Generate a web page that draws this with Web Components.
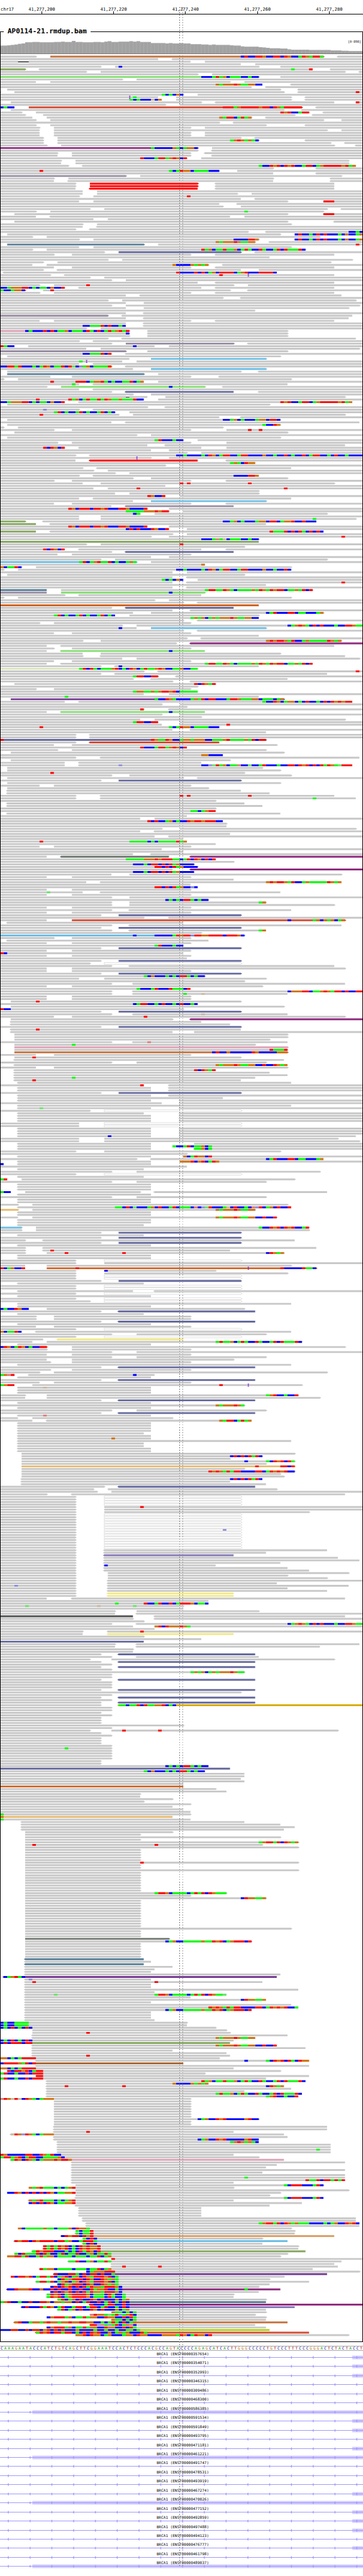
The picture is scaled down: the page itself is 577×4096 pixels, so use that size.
<!DOCTYPE html>
<html lang="en">
<head>
<meta charset="utf-8">
<title>AP0114-21.rmdup.bam chr17</title>
<style>
html,body{margin:0;background:#fff}
body{font-family:"DejaVu Sans Mono","Liberation Mono",monospace;color:#000}
</style>
</head>
<body>
<genome-view>
<genome-ruler chrom="chr17" ticks="41,277,200 41,277,220 41,277,240 41,277,260 41,277,280"></genome-ruler>
<alignment-track>
<span slot="name">AP0114-21.rmdup.bam</span>
<coverage-plot range="[0-898]"></coverage-plot>
<read-pileup></read-pileup>
</alignment-track>
<base-sequence>CAAAGAATACCCATCTGTCAGCTTCGGAAATCCACTCTCCCACGCCAGTACCCCAGAGCATCACTTGGGCCCCCTGTCCCTTTCCCGGGACTCTACTACCT</base-sequence>
<transcript-list>
<transcript-row exon="98">BRCA1 (ENST00000357654)</transcript-row>
<transcript-row exon="98">BRCA1 (ENST00000354071)</transcript-row>
<transcript-row exon="98">BRCA1 (ENST00000352993)</transcript-row>
<transcript-row>BRCA1 (ENST00000346315)</transcript-row>
<transcript-row>BRCA1 (ENST00000309486)</transcript-row>
<transcript-row>BRCA1 (ENST00000468300)</transcript-row>
<transcript-row exon="9">BRCA1 (ENST00000586385)</transcript-row>
<transcript-row exon="98">BRCA1 (ENST00000591534)</transcript-row>
<transcript-row exon="98">BRCA1 (ENST00000591849)</transcript-row>
<transcript-row>BRCA1 (ENST00000493795)</transcript-row>
<transcript-row exon="98">BRCA1 (ENST00000471181)</transcript-row>
<transcript-row exon="9">BRCA1 (ENST00000461221)</transcript-row>
<transcript-row>BRCA1 (ENST00000491747)</transcript-row>
<transcript-row>BRCA1 (ENST00000478531)</transcript-row>
<transcript-row>BRCA1 (ENST00000493919)</transcript-row>
<transcript-row exon="98">BRCA1 (ENST00000467274)</transcript-row>
<transcript-row exon="9">BRCA1 (ENST00000470026)</transcript-row>
<transcript-row exon="98">BRCA1 (ENST00000477152)</transcript-row>
<transcript-row exon="98">BRCA1 (ENST00000492859)</transcript-row>
<transcript-row exon="98">BRCA1 (ENST00000497488)</transcript-row>
<transcript-row>BRCA1 (ENST00000494123)</transcript-row>
<transcript-row exon="98">BRCA1 (ENST00000476777)</transcript-row>
<transcript-row>BRCA1 (ENST00000461798)</transcript-row>
<transcript-row exon="9">BRCA1 (ENST00000489037)</transcript-row>
</transcript-list>
</genome-view>
<script>
// One line per pileup row. "a-b" is a read over columns a..b, "<" or ">" its strand arrow,
// a trailing letter its colour; "67CTT" puts mismatching bases at column 67 (lower case: low quality);
// "D" is a deletion, "I" an insertion, and "xN" repeats the row.
const READS = `0-10> 14-90>o 67CTCCTTGCCTTCTGCCATGATTA <94-101
0-44 <48-101
0-53 57-101 D5-8
0-67 71-101
0-28> 32-72> 33C 78-101
0-7>v <11-87 81A 86T <92-101
0-24> 28-96> <100-101
0-55> 59-101
0-72>g 56CCCATAGCAAACCACC 78-101
0-34> 38-101
0-10 14-64> 68-101
0-73 60GAGGGTGAAGGCC <81-101
0-70 <74-101
2-78> <83-101
0-0>o 4-79> <83-101 99T
0-51> 45ACACGC 55-101
0-44 I36 37A 49-81> <85-101
0-45 36ACACCCgCG 49-81> <85-101
3-56> <60-93 99-101 99T
0-46> 50-101
0-4 0CACC 8-84>s 62TTTAGTTTTTGTTCTGATTTTT <88-101
3-79> <84-101
0-6> 10-86> 78TGTCCATT <90-101
0-7> 12-82> <87-101
0-9 13-70> 61GATTCATAG <74-101
0-10> 14-90> 95-101
0-61> <65-101
0-10> 14-74> <85-101
0-11> 15-53> 57-101
0-11 15-91> 95-101
0-11 15-53> 57-101 x2
0-12> 16-67> <71-101
0-12> 16-72> 64AGTGAGAC <85-101
0-12> 16-92> <96-101
0-13> 17-93> <99-101
0-55>p 42ACCCCCGACAGGC 59-101
0-55> <59-101
0-16> 20-53> <57-101
0-16 20-53> <59-101
0-52> 39TCCCATTAGTGCT 56-101
0-17> 21-97>
0-17 21-97>
0-19> <23-99 72ACCTGTCTGTCCATTCAGTTTTTGTAG
0-76> <88-101
0-61> 11T 47ACATGGCAAAACCC 66-101
0-76 <88-101
0-35>l 39-95>
0-15> 19-76> <92-101
0-15 <19-76 <92-101
0-21> 25-55>r <60-93 x2
0-21 <25-55r <60-93
0-23 27-101
0-23 27-66> 70-101
0-22> 26-101 52T
0-67 <71-101
0-22 26-80> 90-101 90TTT
0-61 <66-101
0-62> 67-101
0-25> 29-91> <95-101
0-10> 14-90> 68A
0-0> 4-80> <90-101 90TTT
0-10 <14-64 68-101
0-26 30-101
4-80> <93-101
0-23> 27-81>
0-23 <27-101
0-21> <25-101
0-69> <74-101 97CCAC
2-78> 82-101 82CTCCACTCTCCCACGCCAG
0-9> 13-89>
0-22> 26-72> 65CCCCTTG <82-101 82CTCCACTCTCCCACGCCAG
0-71> 60GAGGGTGAAGG <75-101
2-40>t 44-101 99T
0-22 26-81>
0-9> 13-85> 56TAGCAATAAGCATACCTACCATCTAAATC
0-29> 33-67>i <71-101
0-15> 20-53> <60-93
0-75
0-30> 34-98>
0-12> 16-92>
0-9 13-58> 48GCCCCGAGAG <62-101
0-15 20-53> <60-93
0-12> <16-67 72-101
<1-77 49TCCCCTCTCAGCTTTTCAGTCCCTTTTC
0-14> <18-93 61T I69
0-25> 29-101
0-31> 35-101
0-55 <60-93
0-11> 15-65> 24T 69-101
0-18> 0CCAGGGTTCACAACGCCT <22-56 <60-93
0-7>h 0ACCAGGC 12-64> 14T <69-101
0-11> 15-53> <60-93
0-35 <39-95
0-62> <67-101
0-30> 34-99>
0-35 40-101
0-31> 35-100>
0-35 40-97>
0-71
0-35 <40-101
0-30>l <34-98
0-35 <40-97
0-11 15-53> <60-93
0-35 <40-101
0-35 23CCAAATCTCCAC <40-101
0-24> 28-101
0-36>k 7CACCCTCTCAAGCAAACTACTCATAGTAT 41-80>
0-36> 35C 41-80>
0-36> 41-80>
0-30> <34-99
0-22> <26-101
0-31> 35-65>l <69-101
0-4 0TACC <8-43 37C 47-101
0-24 28-100>
0-35>l 41-80>
0-31> 23CCAAATCT <35-101
2-78>
0-36 42-74>b
0-34 22A I24 38-101
0-22 <26-101
0-31>z 0CCTTATCCCACATGCAATCTaCcAGCAAAAT <35-101
0-37 42-74>b
2-67> <72-101
2-40>t 44-101
0-14 20-53> <61-101
0-1> 5-81>
0-40 14T 21TTTCAGGTACACCAATCAG 44-101
0-22 20A <26-80
0-13> 17-57>g 47C <62-101
0-22 <26-101
0-31> <35-65i <72-101
0-37> 42-101
0-41 D35-36 46-96>
0-40 10T 19TAGCATAATATGAAGAAATCC 44-101
0-18 0CCAGGGTTCACAACGCCT <22-98 78TGTCCATTCAGTTTTTGTAG
2-75>
0-41> <46-101
0-22> 12c <26-101
0-32> 15ATCACCATCACCATCAC 36-101
0-33> 11T 37-96>
0-61 <67-101
2-78> 62CCAGCACCCAGGCTTC
0-31 <35-100
2-78> 73ACCTG
0-1> 5-62>
0-15> 20-53> 63-101 69T 72T
0-0> 4-80>
0-38> 42-101
2-78>
0-51> 43ATCCCACC 55-101
0-16> 20-53> 63-101
0-41 <46-96
0-18> 12TCTGCT <22-56 63-101
0-42 47-101
0-52> 56-101
0-21> <25-101 49CCACCCCACTGCATTCCATTCCCCGCCACCTCACCTCATTCCACTCCACCCC
0-42> I38 47-101
0-21 <25-55r <63-101
0-71 64AGACTGG
0-46> 50-101
0-23> <27-81
0-26> 30-101
0-32> 36-101
0-22> <26-72 65CCCCTTG
0-37> 42-80>
0-15> 20-53> <63-101
0-23 28-93> 50T 52T 69T
0-46 50-101
0-26 30-101 38T 79T
0-72>
0-32 36-72>
0-46 41TGCCT 50-101
0-22 <26-81
0-37 42-74>b
0-15 20-53> <63-101
0-31 <35-65l
0-41> 19TGCTTTCTTGTCCCTTGCCCCT 47-101
0-47> 35AAAAAGGGTGTT <51-101
0-39> 37CA 43-91>
0-22 28-101
0-22 28-99> 87A
0-7>v <12-88 62CCAGCACCCAGGCTTCAGGTCCTCCC
0-10v <14-74
0-41 19TGCTTTCTTGTCCCTTGCCCCT 47-101
0-47 35CTCTCCCTGCCT 52-101
0-10v <14-90 75TAAATCTCTACTCTC
0-48> 52-101
0-42> 47-101 95T
0-72> 56CCCAtAgCAAACCACC
0-72v
0-24> 28-101 50T
0-68>
0-18 12TCTGCT <22-56 <63-101
0-31> <35-65i
0-16 20-53>
0-42 47-101
0-28> 32-91>
0-38>b 22ATCAGTAATCACCAGA 42-101
0-57 56G
0-6> 0GCAATC 10-81>
0-1> 5-81> 49CCACCCCACTGCATTCCATTCCCCGCCACCTC
0-48 52-101
2-68>
0-48 <52-101
0-51 45ACACGC 55-101
0-48 <52-101 95T
0-74
0-48 <52-101
0-13t 17-87> 57ATTAATGACAAAAGATGATGTTCAAGATCT
0-13l 17-57>g 47C
0-18> <22-56
0-1> 5-81>
0-43> 47-101
0-51> <55-101
0-72h
0-31> <35-65i
0-48 <53-101
0-37 42-90> 74CATCCCTTCAACCCAG
0-32 15ATCACCATCACCATCAC 36-72>
0-72 53AGAGCAGAGGGTGAAGGCC
0-51> <55-101
0-11> 15-53>
0-34> 38-101 80CAGTGACTCTCCCACCTTGAA
0-38 33C 42-74>b
0-51> <55-101
0-15 20-53>
0-72
0-52> <56-101
0-23> 28-95> 74GTGTTGATCCAGAAAAATGAG
0-49> <53-101p
0-13 <17-93
0-15> 20-53>
0-13 <17-57g 47C
0-23 28-78>
0-23> <28-96
0-34 38-100>
0-15 20-53>
0-13 <17-87 57ATTAATGACAAAAGATGATGTTCAAGATCT
0-28> <32-72 33C
0-55>n 22ATCTACAAAGTCACTGCATAAGTGCCAAGCCAA
0-40> <44-101 99T
0-28> <32-91
0-44> 37ATTCCTT <49-101
0-37> <42-80
0-48> <53-101
4-60> 54TCTGAT
0-55>
0-10> 15-53>
0-55 37AGGAAGAGTTGTCAAAAA
0-40 47-101
0-72 18A
3-79>u 43ACCTGACCCCAGATCTTCCCATTGAAAGGCAAACAG
0-18 <22-98 73ACCTGCAGGCACTCCACTCTGTGTT
0-45> 50-101
0-52>
0-40> 39T <47-101
0-13 <17-57g 47C
0-45> 50-101
0-56>
0-39 43-96>
0-44 37ATTCCTT 50-101
0-45 50-101 63T
0-61 11T 47ACATGGCAAAACCC
0-48 <53-101
0-74
0-21> <25-101 x2
0-74>i 0T 42TGAATGCCAGGAGGGCCAAAGTAAAAGATCTT
0-21> <25-61s
0-15 20-77>
0-52 39TCCCATTAGTGCT
0-16> 20-74>
3-79>
0-62 56GGCCCC
0-21> <28-100
3-64>
0-18 <22-56
0-18 <22-98 33c 56CCcaTAGCAAtCCaCCATCCCACCTTCTGTCTCTATGAaTTT
2-73>
2-78>
0-68> 14T
0-31> 36-81>
2-51> <55-101
0-28> 33-67>i
2-78>
0-11 15-53>
2-58>
<2-67
<2-75
0-21> <28-93 50T 52T 69T
0-21> <28-99 87A
0-60>
<2-68
<2-73
0-60>
0-60 53AACAGTT
<2-78
0-52
0-39 43-101
0-62 41TCTCCAGCACCTGTTGTTTCC
0-63>
0-63
0-45> 50-99>
0-39 <43-101
0-64
0-43 <47-101
0-51
0-52 11T 36AAAAACACAAAAATAG
0-60
0-11 15-53>
0-45 <50-101
0-51
0-37 <42-101
0-13 <17-47x <53-101p
0-60 35AAAAAGGGTGTTTAACATCTGCTCT
0-65>
0-54> 37CCCACTTCTCTAGCCCC
0-55> 43TTCTCTAGCCCC
0-48 <53-101p
0-54 37CCCACTTCTCTAGCCCC
0-31 36-95>
0-13 20-53>
0-65
0-24 <28-95 74GTGTTGATCCAGAAAAATGAG
0-53
0-55 43TTCTCTAGCCcC
0-13 20-53>
0-23 13a <28-78
0-13 20-53>
0-31> 36-101
0-58> 46CACACTTACACC
0-31> 36-74> 72AG
0-31> 36-93>
0-13 20-53>
0-31> <36-81
0-13 20-53>
0-28> 33-67>i
0-40> <47-101
0-13 20-96>s 80C 87AGCGAGCAG
<2-51
0-31> <36-95
0-28> 33-67>i
0-31> <36-74 72AG
0-56>
0-68>b 37C 43CCCCCATGTTcTTGGTTTTCTTTGC
0-15> 20-53>
<2-58
0-13 20-53>
0-51 43ATCCCACC
0-28> 33-67>i
0-13 20-53>
0-51 0TC
0-13 20-53>
0-52
0-28> 33-67>i
0-25> 29-67>w
0-31> <36-93
0-13 20-96>
0-13 20-53>
0-28> 33-67>i
0-57> 40ACGCCCACACTTACACC
0-22 29-74>
0-68>
0-31> <37-96
0-13 20-73>
0-53 38ACCCATCCCTAAACT
0-31> <37-101 80CGGGTTCAAGTGATTCTCCTT
0-31> <37-80 51A 56g
0-13 20-53> x2
3-67> 10T
0-55 37CATTCCACTCCACTCCAC
3-79>
0-51> 0TCC
0-28> 33-67>i
0-31> <37-80 56g
0-15 20-96> 40T
3-48> <53-101p
<3-56
<3-64
0-28> 33-67>i
<3-67 10T
<3-48 54-101
4-80> x2
4-75>
0-31> <37-80 41t
4-71> 20A
4-80>k
4-80> 75TAAAT
4-80>o 59CTCCGCCCCCCTGCCCCCGGG
0-10 15-53>
4-67> 9T
<4-79
0-31> 38-74>
<4-80 60GAGGGTGAAGGCCTCCTGAG
0-10 15-80>
<4-60 54TCTGAT
<4-75
<4-80
<4-71 20A
<4-67 9T
<5-81
0-40 39T <47-101
<5-42 <47-101 x2
0-28> 33-67>i
<5-42 <47-101
<5-62
<5-42 <50-101
0-45 <50-101
<5-81
<5-42 11a <50-101
0-25> 29-67>w
<5-40 <50-101
<5-42 <50-101 x3
0-22 29-67>w x2
<5-42 <50-101 x3
<5-42 30C <50-99
0-22 29-94>
0-22 29-100>
<5-42 54-101
<5-42 48-101 48ACCATCAAGCA
<5-42 <54-101 54AAGCA
0-21> 29-78>
0-52>
<5-42 <51-101 51GCATGGCT
0-38> <42-90 74CATCCCTTCAACCCAG
<5-42 50-101 50GGGTCGTCATG
0-1 0C <5-42
0-52
<5-40
0-31> 38-89>
0-21> 29-67>w
<5-40
0-2 0AT 6-82>
0-31> 38-74>
0-0> <5-42
<5-42 x2
0-3 0ACC 7-39> <43-91
<5-42
0-31> 38-74>
<5-42 x2
0-5> 9-80>
<5-81 32AACTCaCCCAGCTCCATCAAACtCcaTCCCAgCTCCACtcTCAGCTCCT
0-5>q 9-71> 60GAGGGTGAAGG
<5-42 x2
0-5 9-77> 60GAGGGTGAAGGCCTCCT
<5-42 x2
<5-40
0-6>b 10-86> 72ACCTGTCTGTCCAT
0-6> 10-86>
0-28> 33-67>i
<5-40
0-28> 33-67>i
0-7> <12-82
0-28> 33-67>i
<5-42
0-7> <12-88
0-7> <12-64 14T
0-7> 13-79> 18T 34T 74CTGAG
<5-42 x2
0-21> 29-67>w
0-21> 29-101
0-7 13-81>
0-7 0TCAGCCT 13-88>h 21T I69 78TCCCCCTAAC
0-21> 29-60> 29C
0-21> 29-80>
0-21> 29-67>w x2
0-28> 33-67>i
<5-40
0-21> 29-67>w x2
<5-37 <43-101
0-21> 29-67>w
<5-42
0-21> 29-67>w
0-25> 29-67>w
<5-81
<5-42
0-8 0CACCTGCC 13-68>
0-28> <33-71i
<5-40
0-10> 15-53> x2
0-28> <33-71i
<5-42
0-10 15-53>
0-21> 29-67>w
0-6 0GCAATC <10-81
0-31> 38-74>
0-21> 29-67>w
0-12 <16-51y
0-9 13-84> 60ATAAGCATACCTACCATCTAAATC
<5-42
0-13>s 0CTGCATGCACCTT 20-96>
0-13> 20-53>
0-31> 38-101
0-13 20-53>
0-31> 38-74>
0-13 20-65>
0-14> 20-53>
<5-81
0-28> <33-71i
0-14> 20-53>
0-11> 15-91>
0-4> 0AGtT <8-43 37C
<5-42
0-28> <33-71i
0-11 15-53>
0-4 0AGTT 9-84> 61T I69
<5-42 12g
<5-42 x2
0-7> 13-83> 74AGTCCACCT
0-7 13-89>
0-28> <33-71i
<5-42
0-68> 60GAGGGTGA
<5-42
0-31> 38-74>
0-28> <33-71i
<5-42 12t
0-5 9-48>
0-9 <13-70 61GATTCATAG
<5-42 x4
<5-40
<5-42
<5-42 31G
<5-81
<5-40 x2
<5-42 x2
6-82>
6-73> 64CTCTCTATC
6-64>
6-82> 68C 74ACTGTCTA
6-74>
6-82>q 71T 78TTCT
6-68>
6-82> 58TGTGATATTCCCCTTCATGTGTCC
6-78>
6-79>
<6-73 64CTCTCTATC
<6-64
<6-74
0-29> <33-71i
0-26> 30-77>
0-27> 31-101
0-13> <20-96
0-21> 29-67>w x4
0-21> 29-101 39T
0-21> 29-101
0-21> 29-86>
0-21> 29-67>w x6
0-21> 29-67>w 62c
0-21> 29-67>w x7
0-21> <29-91
0-21> <29-74
0-21> <29-65m
0-21> <29-94
0-21> <29-100
0-21> <29-78
0-21> <29-60 29C
0-21> <29-80
0-21> <29-86
0-21> 30-97>
0-21> 30-80>
0-21> 30-91>
0-21> <30-101
0-21> <30-77
0-21> 4c <30-97
0-21> <30-80
0-21> <30-91
0-21> <30-65y x2
0-13 <20-96
0-58
0-58 32A 40TCCATCCTCATTTGCAAC
0-51> 7a 27g 37a
0-51
0-32> 38-72>
0-32 <38-101
0-37d <43-96
0-37> <43-101
0-40>
0-31> <38-101 80CAGTGACTCTCCCACCTTGAA
0-37 43-101 43GTCTGGGTGA
0-43
0-23> <30-101 39T
0-23 <30-65y
0-40>
0-56
0-40i
0-32> <38-100
0-32 <38-89
0-37>
0-37
0-28> <33-71i
0-31> <38-72
0-25> 31-93>
0-28> <33-71i
0-31>
0-28> <33-71i
0-31>
0-68> 53AGAGCAGAGGGTGAA
0-31> x2
0-28> <33-71i
0-31> x3
0-28> <33-71i
0-67>
0-31>
0-28> <33-71i
0-31>
0-28> <33-71i
0-28> <33-101z 33AACAATCTAAGGTCAC
0-31> x2
0-28>
0-31>
0-28> x3
0-51>
0-31>
0-25> 31-94> 34T 44T
0-28>
0-31>
0-28> x3
0-31>
0-31> 18A
0-31> x4
0-28> x2
0-58 46CACACTTACACC
0-64i
0-57 40ACGCCCACACTTACACC
0-68 x2
0-67
0-68
0-51
0-51h
0-60>
0-63
0-39>
0-39
0-48>
0-40>
0-53>
0-48
0-51
0-53
0-53> 0A
0-48q 0G
0-53 0A
<6-68
<6-78
<6-82
<6-79
7-48>
7-39>
7-78>
7-39>
7-83> 72AGTTATCTGAG
7-73> 9T 43T
7-83>
7-39> x5
7-83> 39T
7-39> x2
7-83>
7-39> x8
7-63> 43ATTGCAAAACATATCTGAAA
7-53>
7-74> 67CTGGAAG
7-39> x11
7-81>
7-39> x3
7-47>x
7-70> 46CAGCCAAAAAGAATGTCAGTTTCT
7-39> x6
<7-40t
<7-42
<7-40t
<7-48
<7-43
<7-42
<7-78
<1-77u 1CAGTAC
<7-42 8c
<7-73 9T 43T
<7-42 x2
<7-83
<7-43
<7-63 15a 43ATTGCAAAACATATCTGAAa
<7-53
<7-74 67CTGGAAG
<7-42
<7-81
<7-83 58TGTGATATTCCCCTTCATGTGTCCA
<7-70 46CAGCCAAAAAGAATGTCAGTTTCT
<7-42 x3
<7-43
0-52> 0CACCAAAA
0-52 0CACCAAAA
0-60> 0CACTCACTC
9-63>
9-64> 24T
<9-80
<9-71 60GAGGGTGAAGG
0-65 0CACTCACTC
0-64v 0CTCTTTCTT
<9-77 60GAGGGTGAAGGCCTCCT
<9-85
<9-48
<9-63
<9-64 24T
0-61> 0GGCACATTTT
<10-86 68C 74ACTGTCTACTGG
0-51c 0CTTTTGATCT
<10-86
0-65 0GGCACATTTT
2-78> 2TCTTGTCATT
0-57> 0ATCCACCTCTTT
<10-86 10TT
0-74 0ATCCACCTCTTT
<13-85 56TAGCAATAAGCATACCTACCATCTAAATC
<13-58 48GCCCCGAGAG
<13-79 18T 34T 74CTGAG
<13-81
<13-68
<13-84 60ATAAGCATACCTACCATCTAAATC
<13-83 74AGTCCACCT
0-53> 0tTGgTgCTGACAGGG
15-53> x7
15-72> 55CAGCCTGTCCCCCGTCC
15-53> x2
<15-91 x2
<15-65 24T
<3-79 3gTGcTGACAGGG
<15-80
<15-72 55CAGCCTGTCCCCCGTCC
<16-72 64AGTGAGAC
<16-92 x2
<16-92 88A
<16-92
0-65 0TGCCCCCTTCCTGATCC
0-72> 0ATTAGTCATTCCAAAAGC
<3-79k 3ATGCTGACAGGGTGTTG
<20-96
<20-77
<20-74
<20-96
<20-73
<20-96
<20-96 68A
<20-96 85TAATCTTATAT
<20-65
21-90> 79ACTTTCCCATC
8-65> 8GAGTAAACACAGT
21-97>
2-78> 2CCTGCTCTCTCTGCAAGGT
21-75>
<21-90 79ACTTTCCCATC
<8-65 8GAGTAAACACAGT
<8-84 8CTCTCTGCAAGGT
<21-75
<22-56 x4
<23-99 x2
<24-100 72AGTTATCTGAGAAACCCCACAGCCTGTC
<24-100
5-81> 5GCAAAAAGAACAAAGCTGGA
21-82> 21ACAAT
<21-82 21ACAAT
<17-93a 17CTGTTCTGT
23-73> 23ACTC
<4-80b 4TGTTCTGTTTTCTTAGCCATTTA
<23-73 23ACTC
12-83> 12TATATGTCACTGTGGT
<12-83 12TATATGTCACTGTGGT
<9-85v 9ATGTTTCCCACACTATGCT
4-80> 4ACTAAATCTACCATCAATCCAGCAATA
2-78> 2GGTTATCCATAGGCAAAACAAACAATCAG
<31-101 31T
<19-95 19AATCCAGCAATA
<31-93
<31-94 34T 44T
<11-87 11TAGGCAAAACAAACAATCAG
24-100> 24CAGGGTTT
<15-91u 15TCCCTTACTCTTCTCCA
3-79> 3TCTTGTCATTATCAGTCAGCTGATTTGTCA
16-75> 16CTAGTTTCTGCCTGAGA
<10-86 10ATTATCAGTCAGCTGATTTGTCA
<16-75 16CTAGTTTCTGCCTGAGA
14-72> 14CTCTGTCTCTATGGATTTGC
<2-78p 2CCTGGGTCCGCCTCTCCTCCTCCTAGGTCCAC 68A
<14-72 14CTCTGTCTCTATGGATTTGC
13-65> 13ATGTCAGTTTTGCAAACTACCA
<13-65 13ATGTCAGTTTTGCAAACTACCA
16-74> 16ATCAGCTCCTGCTCCCGCAG
0-74t 0AGTCCACCTCCTTGCGGAGGCTCATCCTCATCACTC
<25-101p 25TCCCATTCCTC
<6-82m 6CTCCCTATGCATCCATTCATTCATCCACTC
<16-74 16ATCAGCTCCTGCTCCCGCAG
31-74> 31GAACACA
25-71> 25tTGGAaATcAGTC
13-74> 13CGTTTAGCAATAGGCCTGGCCTCTA
<31-74 31GAACACA
<4-80o 4GTCCAGGAGTGGAGGTGGTTGGCCACATACTCAG
<25-71 25TTctAcATCAGtC
<13-74 13CGTTTAGCAATAGGCCTGGCCTCTA
0-75e 0CCCTTCCTCTTCGTCTCTCCCGCCCCACCACCACCAACA
<10-86s 10ATGTCTTATTCACTCTGTCCGCAGAGCCCTA
21-97> 21GGTCTGGCAGCCCAGGCTGGCCCCGGGGATGCATGGCT`;

// Coverage depth: run length x bar height.
const DEPTH = '2x23 1x24 1x25 1x26 1x28 1x29 2x32 2x33 4x32 2x33 1x34 2x33 1x36 2x33 3x32 2x33 1x32 1x34 1x35 2x33 3x34 1x35 1x34 1x35 3x33 4x30 1x29 1x30 2x29 1x30 2x29 3x27 2x26 1x25 1x26 4x25 1x24 2x23 1x21 4x20 1x19 1x18 1x17 3x16 2x15 1x13 5x12 6x11 3x10 2x9 4x8';

const READ_COLOR = {
  '': '#c8c8c8', o: '#c47541', g: '#83dd70', r: '#ff0000', s: '#d54e36', p: '#8f2d80', l: '#978ca2',
  t: '#587f99', i: '#65699d', b: '#6ebfe5', k: '#dca3b7', v: '#86a860', y: '#f1e988', n: '#d9e5be',
  u: '#743a92', x: '#6e776d', d: '#515452', q: '#e7bb70', h: '#d16522', m: '#897bb8', z: '#d5a800',
  c: '#a55b24', a: '#dba066', e: '#aad400'
};
const BASE_COLOR = {
  A: '#00ff00', C: '#0000ff', G: '#d17105', T: '#ff0000',
  a: '#64e664', c: '#8c8cdc', g: '#cbb79f', t: '#e17878'
};

function attach(el, html) {
  const root = el.attachShadow({ mode: 'open' });
  root.innerHTML = html;
  return root;
}

customElements.define('genome-view', class extends HTMLElement {
  constructor() {
    super();
    attach(this, `<style>
      :host{display:block;position:relative;overflow:hidden;background:#fff;padding-bottom:8px}
      .cursor{position:absolute;top:11px;bottom:12px;left:calc(100% * 50 / 101 - 1px);width:calc(100% / 101 + 1px);
        display:flex;justify-content:space-between;pointer-events:none}
      .cursor i{width:1px;background:repeating-linear-gradient(#808080 0 .3vw,transparent .3vw .7vw)}
      .cursor i + i{opacity:.75}
    </style><slot></slot><div class="cursor"><i></i><i></i></div>`);
  }
});

customElements.define('genome-ruler', class extends HTMLElement {
  connectedCallback() {
    const cells = this.getAttribute('ticks').split(' ').map(t => `<div class="tick"><span>${t}</span><i></i></div>`).join('');
    attach(this, `<style>
      :host{display:flex;height:22px;border-bottom:1px solid #000;font-size:7px;line-height:8px;overflow:hidden}
      .chrom{flex:none;width:1.6%;min-width:0;white-space:nowrap;align-self:flex-end;margin-bottom:3px;text-indent:1px}
      .tick{flex:none;width:calc(100% * 20 / 101);display:flex;flex-direction:column;align-items:center;justify-content:flex-end}
      i{width:1px;height:4px;margin-top:-1px;background:#000}
    </style><span class="chrom">${this.getAttribute('chrom')}</span>${cells}`);
  }
});

customElements.define('alignment-track', class extends HTMLElement {
  constructor() {
    super();
    attach(this, `<style>
      :host{display:block;position:relative;margin-top:19px;padding-bottom:9px}
      :host::after{content:"";position:absolute;inset:8px 0 0;border:1px solid #000;border-top:0;pointer-events:none}
      header{display:flex;align-items:center;height:16px;gap:6px;font-size:11px;font-weight:bold;line-height:14px}
      header::before,header::after{content:"";height:1px;background:#000}
      header::before{width:6px}
      header::after{flex:1}
    </style><header><slot name="name"></slot></header><slot></slot>`);
  }
});

customElements.define('coverage-plot', class extends HTMLElement {
  connectedCallback() {
    let x = 0, bars = '', caps = '';
    for (const run of DEPTH.split(' ')) {
      const [n, h] = run.split('x').map(Number);
      bars += `M${x * 10} 48V${48 - h}H${(x + n) * 10}V48Z`;
      caps += `M${x * 10} ${48.5 - h}H${(x + n) * 10}`;
      x += n;
    }
    for (let k = 1; k < 101; k++) caps += `M${k * 10} 48V10`;
    attach(this, `<style>
      :host{display:block;position:relative;height:28px;margin-bottom:2px}
      svg{display:block;width:100%;height:100%}
      span{position:absolute;right:3px;top:5px;font-size:5px;line-height:6px}
    </style><svg viewBox="0 0 1010 48" preserveAspectRatio="none">
      <clipPath id="c"><path d="${bars}"/></clipPath>
      <path d="${bars}" fill="#a2a2a2"/>
      <path d="${caps}" clip-path="url(#c)" stroke="#b4b4b4" fill="none"/>
      <path d="M0 47.3H1010" stroke="#6e6e6e" stroke-width="1.4"/>
    </svg><span>${this.getAttribute('range')}</span>`);
  }
});

customElements.define('read-pileup', class extends HTMLElement {
  connectedCallback() {
    const fills = {}, marks = {};
    let hollow = '', gaps = '', dels = '', ins = '', row = 0;
    const add = (map, color, d) => { map[color] = (map[color] || '') + d; };
    for (const line of READS.split('\n')) {
      const tokens = line.split(' ');
      let times = 1;
      if (/^x\d+$/.test(tokens[tokens.length - 1])) times = +tokens.pop().slice(1);
      for (; times > 0; times--, row++) {
        const y = row * 7;
        for (const token of tokens) {
          let m;
          if ((m = /^(<?)(\d+)-(\d+)(>?)([a-z]?)$/.exec(token))) {
            const a = m[2] * 10, b = m[3] * 10;
            const right = m[4] ? `L${b + 1} ${y + 2}L${b + 4} ${y + 3.5}L${b + 1} ${y + 5}L${b} ${y + 6}` : `V${y + 6}`;
            const left = m[1] ? `H${a}L${a - 1} ${y + 5}L${a - 4} ${y + 3.5}L${a - 1} ${y + 2}Z` : `H${a}Z`;
            const d = `M${a} ${y + 1}H${b}${right}${left}`;
            if (m[5] === 'w') hollow += d; else add(fills, READ_COLOR[m[5]], d);
          } else if ((m = /^D(\d+)-(\d+)$/.exec(token))) {
            gaps += `M${m[1] * 10} ${y}H${m[2] * 10}V${y + 7}H${m[1] * 10}Z`;
            dels += `M${m[1] * 10} ${y + 4}H${m[2] * 10}`;
          } else if ((m = /^I(\d+)$/.exec(token))) {
            const x = m[1] * 10;
            ins += `M${x - 1} ${y + .5}h4M${x + 1} ${y + .5}v6M${x - 1} ${y + 6.5}h4`;
          } else if ((m = /^(\d+)([A-Za-z]+)$/.exec(token))) {
            let x = m[1] * 10;
            for (const run of m[2].match(/(.)\1*/g)) {
              add(marks, BASE_COLOR[run[0]], `M${x} ${y + 1}h${run.length * 10}v5H${x}Z`);
              x += run.length * 10;
            }
          }
        }
      }
    }
    const paint = map => Object.keys(map).map(c => `<path fill="${c}" d="${map[c]}"/>`).join('');
    attach(this, `<style>
      :host{display:block}
      svg{display:block;width:100%;aspect-ratio:1000/${row * 7}}
    </style><svg viewBox="0 0 1010 ${row * 7}" preserveAspectRatio="none" role="img" aria-label="Aligned reads">
      ${paint(fills)}<path d="${hollow}" fill="#fff" stroke="#c8c8c8"/>
      <path d="${gaps}" fill="#fff"/><path d="${dels}" stroke="#000" stroke-width="2"/>
      ${paint(marks)}<path d="${ins}" stroke="#7a1fdc" stroke-width="1.6" fill="none"/>
    </svg>`);
  }
});

customElements.define('base-sequence', class extends HTMLElement {
  connectedCallback() {
    const bases = [...this.textContent.trim()].map(b => `<span class="${b}">${b}</span>`).join('');
    attach(this, `<style>
      :host{display:grid;grid-template-columns:repeat(101,minmax(0,1fr));margin-top:6px;height:6px;
        border:solid #a8a8a8;border-width:1px 0;font-size:6px;line-height:6px;text-align:center}
      .A{color:#009600}.C{color:#000096}.G{color:#c07010}.T{color:#a00000}
    </style>${bases}`);
  }
});

customElements.define('transcript-list', class extends HTMLElement {
  constructor() {
    super();
    attach(this, `<style>
      :host{display:grid;grid-auto-rows:minmax(0,1fr);aspect-ratio:1000/601;margin-top:1px}
    </style><slot></slot>`);
  }
});

customElements.define('transcript-row', class extends HTMLElement {
  connectedCallback() {
    const exon = this.getAttribute('exon');
    const from = exon * 1000 / 101;
    let arrows = '';
    for (let x = 20; x < 1000; x += 60) arrows += `M${x} 16.5L${x + 4} 12V21Z`;
    attach(this, `<style>
      :host{display:grid;min-height:0}
      svg,span{grid-area:1/1;min-height:0}
      svg{display:block;width:100%;height:100%}
      span{justify-self:center;padding-left:4px;font-size:6px;line-height:8px}
    </style><svg viewBox="0 0 1000 25" preserveAspectRatio="none">
      ${exon ? `<rect x="${from}" y="11.5" width="${1000 - from}" height="10" fill="#d2ccff"/>` : ''}
      <path d="M0 16.5H1000" stroke="#a099ff" stroke-width="2"/><path d="${arrows}" fill="#a099ff"/>
    </svg><span><slot></slot></span>`);
  }
});
</script>
</body>
</html>
